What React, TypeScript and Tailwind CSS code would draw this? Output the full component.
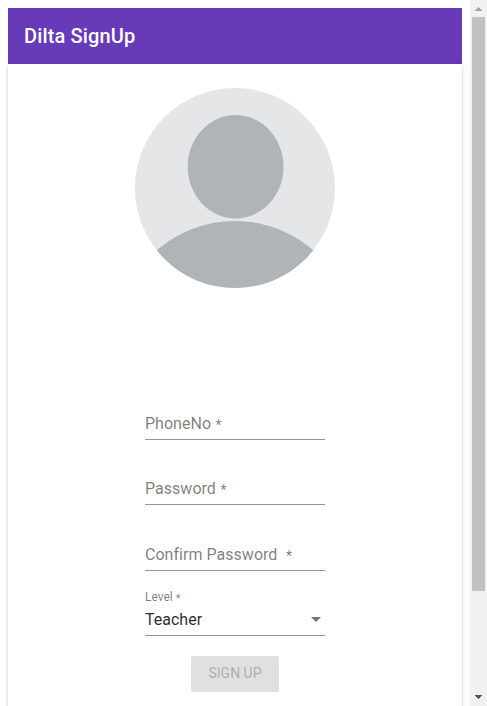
import React from "react";

function Avatar() {
  return (
    <svg className="mx-auto block h-[200px] w-[200px]" viewBox="0 0 200 200" aria-hidden="true">
      <defs>
        <clipPath id="avatar-circle">
          <circle cx="100" cy="100" r="100" />
        </clipPath>
      </defs>
      <g clipPath="url(#avatar-circle)">
        <rect width="200" height="200" fill="#e4e6e8" />
        <ellipse cx="100.6" cy="78.8" rx="47.9" ry="51.7" fill="#aeb4b8" />
        <circle cx="100" cy="252" r="119" fill="#aeb4b8" />
      </g>
    </svg>
  );
}

function Field({ label, className }: { label: string; className: string }) {
  return (
    <div className={`flex items-end border-b border-[#949494] ${className}`}>
      <label className="whitespace-pre text-[16px] leading-[18px] tracking-[0.03px] text-black/52">
        {label}{" "}
        <span className="ml-[0.5px] align-[-1px] text-[14px] leading-none">*</span>
      </label>
    </div>
  );
}

function Scrollbar() {
  return (
    <div className="flex h-full w-[17px] shrink-0 flex-col items-center bg-[#f1f1f1]">
      <svg className="h-[17px] w-[17px]" viewBox="0 0 17 17" shapeRendering="crispEdges">
        <path d="M5 11h7v-1h-1V9h-1V8H9V7H8v1H7v1H6v1H5z" fill="#a3a3a3" />
      </svg>
      <div className="h-[574px] w-[13px] bg-[#c1c1c1]" />
      <svg className="mt-auto h-[17px] w-[17px]" viewBox="0 0 17 17" shapeRendering="crispEdges">
        <path d="M5 6h7v1h-1v1h-1v1H9v1H8V9H7V8H6V7H5z" fill="#505050" />
      </svg>
    </div>
  );
}

export default function App() {
  return (
    <div className="flex h-[706px] w-[487px] overflow-hidden bg-white font-['Roboto',sans-serif]">
      <main className="flex h-full flex-1 flex-col overflow-hidden pt-2 pr-2 pl-2">
        <header className="flex h-14 shrink-0 items-center bg-[#673ab7] px-4">
          <h1 className="text-[20px] font-medium tracking-[0.14px] text-white">Dilta SignUp</h1>
        </header>
        <section className="h-[720px] shrink-0 bg-white pt-6 shadow-[0_3px_1px_-2px_rgba(0,0,0,0.2),0_2px_2px_0_rgba(0,0,0,0.14),0_1px_5px_0_rgba(0,0,0,0.12)]">
          <Avatar />
          <form className="mx-auto flex w-[180px] flex-col">
            <Field label="PhoneNo" className="mt-[127px] h-[25px] pb-[6px]" />
            <Field label="Password" className="mt-10 h-[25px] pb-[6px]" />
            <Field label="Confirm Password " className="mt-[41px] h-[25px] pb-[6px]" />
            <div className="mt-[18px] flex h-[47px] flex-col border-b border-[#949494]">
              <label className="text-[12px] leading-4 text-black/52">
                Level <span className="align-[-1px] text-[11px] leading-none">*</span>
              </label>
              <div className="mt-[6px] flex items-center justify-between pr-1">
                <span className="text-[16px] leading-[18px] text-black/85">Teacher</span>
                <svg className="mb-[2px] h-[5px] w-[10px]" viewBox="0 0 10 5">
                  <path d="M0 0h10L5 5z" fill="#757575" />
                </svg>
              </div>
            </div>
            <button
              type="button"
              disabled
              className="mt-5 flex h-9 w-[88px] items-center justify-center self-center rounded-[2px] bg-[#e0e0e0] pb-[2px] text-[14px] text-black/26"
            >
              SIGN UP
            </button>
          </form>
        </section>
      </main>
      <Scrollbar />
    </div>
  );
}
